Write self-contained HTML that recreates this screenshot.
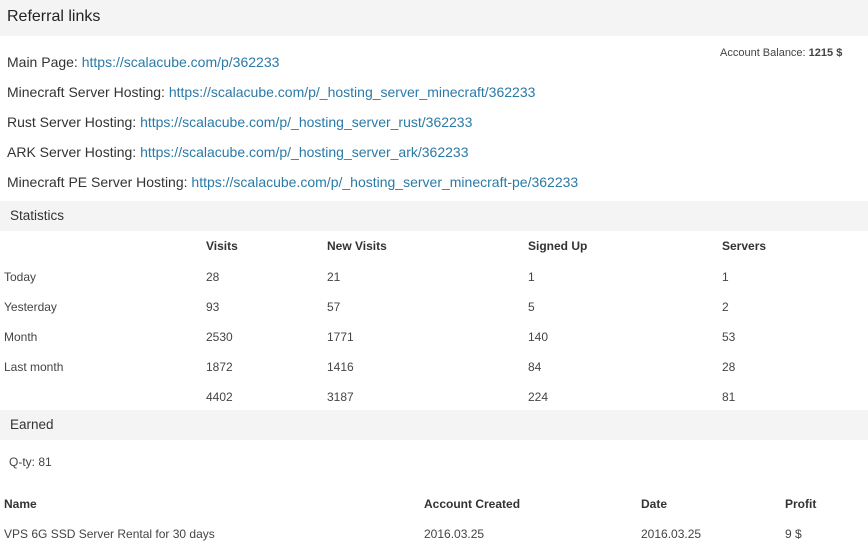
<!DOCTYPE html>
<html><head><meta charset="utf-8"><style>
*{margin:0;padding:0;box-sizing:border-box}
body{width:868px;height:555px;overflow:hidden;background:#fff;font-family:"Liberation Sans",sans-serif;color:#333;position:relative}
.band{position:absolute;left:0;width:868px;background:#f4f4f4}
.t{position:absolute;white-space:nowrap}
.l{font-size:14px;color:#333}
.l a{color:#2a7aa8;text-decoration:none}
.s{font-family:"Liberation Sans",sans-serif;font-size:12px;color:#444}
.b{font-weight:bold;color:#333}
</style></head><body>
<div class="band" style="top:0;height:36px"></div>
<div class="t" style="left:7px;top:8px;font-size:16px;color:#222">Referral links</div>
<div class="t s" style="left:720px;top:47px;font-size:11px">Account Balance: <b>1215 $</b></div>
<div class="t l" style="left:7px;top:54px">Main Page: <a>https://scalacube.com/p/362233</a></div>
<div class="t l" style="left:7px;top:84px">Minecraft Server Hosting: <a>https://scalacube.com/p/_hosting_server_minecraft/362233</a></div>
<div class="t l" style="left:7px;top:114px">Rust Server Hosting: <a>https://scalacube.com/p/_hosting_server_rust/362233</a></div>
<div class="t l" style="left:7px;top:144px">ARK Server Hosting: <a>https://scalacube.com/p/_hosting_server_ark/362233</a></div>
<div class="t l" style="left:7px;top:174px">Minecraft PE Server Hosting: <a>https://scalacube.com/p/_hosting_server_minecraft-pe/362233</a></div>
<div class="band" style="top:201px;height:30px"></div>
<div class="t s" style="left:10px;top:208px;font-size:13.5px;color:#333">Statistics</div>
<div class="t s b" style="left:206px;top:239px">Visits</div>
<div class="t s b" style="left:327px;top:239px">New Visits</div>
<div class="t s b" style="left:528px;top:239px">Signed Up</div>
<div class="t s b" style="left:722px;top:239px">Servers</div>

<div class="t s" style="left:4px;top:270px">Today</div><div class="t s" style="left:206px;top:270px">28</div><div class="t s" style="left:327px;top:270px">21</div><div class="t s" style="left:528px;top:270px">1</div><div class="t s" style="left:722px;top:270px">1</div>
<div class="t s" style="left:4px;top:300px">Yesterday</div><div class="t s" style="left:206px;top:300px">93</div><div class="t s" style="left:327px;top:300px">57</div><div class="t s" style="left:528px;top:300px">5</div><div class="t s" style="left:722px;top:300px">2</div>
<div class="t s" style="left:4px;top:330px">Month</div><div class="t s" style="left:206px;top:330px">2530</div><div class="t s" style="left:327px;top:330px">1771</div><div class="t s" style="left:528px;top:330px">140</div><div class="t s" style="left:722px;top:330px">53</div>
<div class="t s" style="left:4px;top:360px">Last month</div><div class="t s" style="left:206px;top:360px">1872</div><div class="t s" style="left:327px;top:360px">1416</div><div class="t s" style="left:528px;top:360px">84</div><div class="t s" style="left:722px;top:360px">28</div>
<div class="t s" style="left:206px;top:390px">4402</div><div class="t s" style="left:327px;top:390px">3187</div><div class="t s" style="left:528px;top:390px">224</div><div class="t s" style="left:722px;top:390px">81</div>

<div class="band" style="top:410px;height:30px"></div>
<div class="t s" style="left:10px;top:417px;font-size:13.5px;color:#333">Earned</div>
<div class="t s" style="left:9px;top:455px">Q-ty: 81</div>
<div class="t s b" style="left:4px;top:497px">Name</div>
<div class="t s b" style="left:424px;top:497px">Account Created</div>
<div class="t s b" style="left:641px;top:497px">Date</div>
<div class="t s b" style="left:785px;top:497px">Profit</div>
<div class="t s" style="left:4px;top:527px">VPS 6G SSD Server Rental for 30 days</div>
<div class="t s" style="left:424px;top:527px">2016.03.25</div>
<div class="t s" style="left:641px;top:527px">2016.03.25</div>
<div class="t s" style="left:785px;top:527px">9 $</div>
</body></html>
